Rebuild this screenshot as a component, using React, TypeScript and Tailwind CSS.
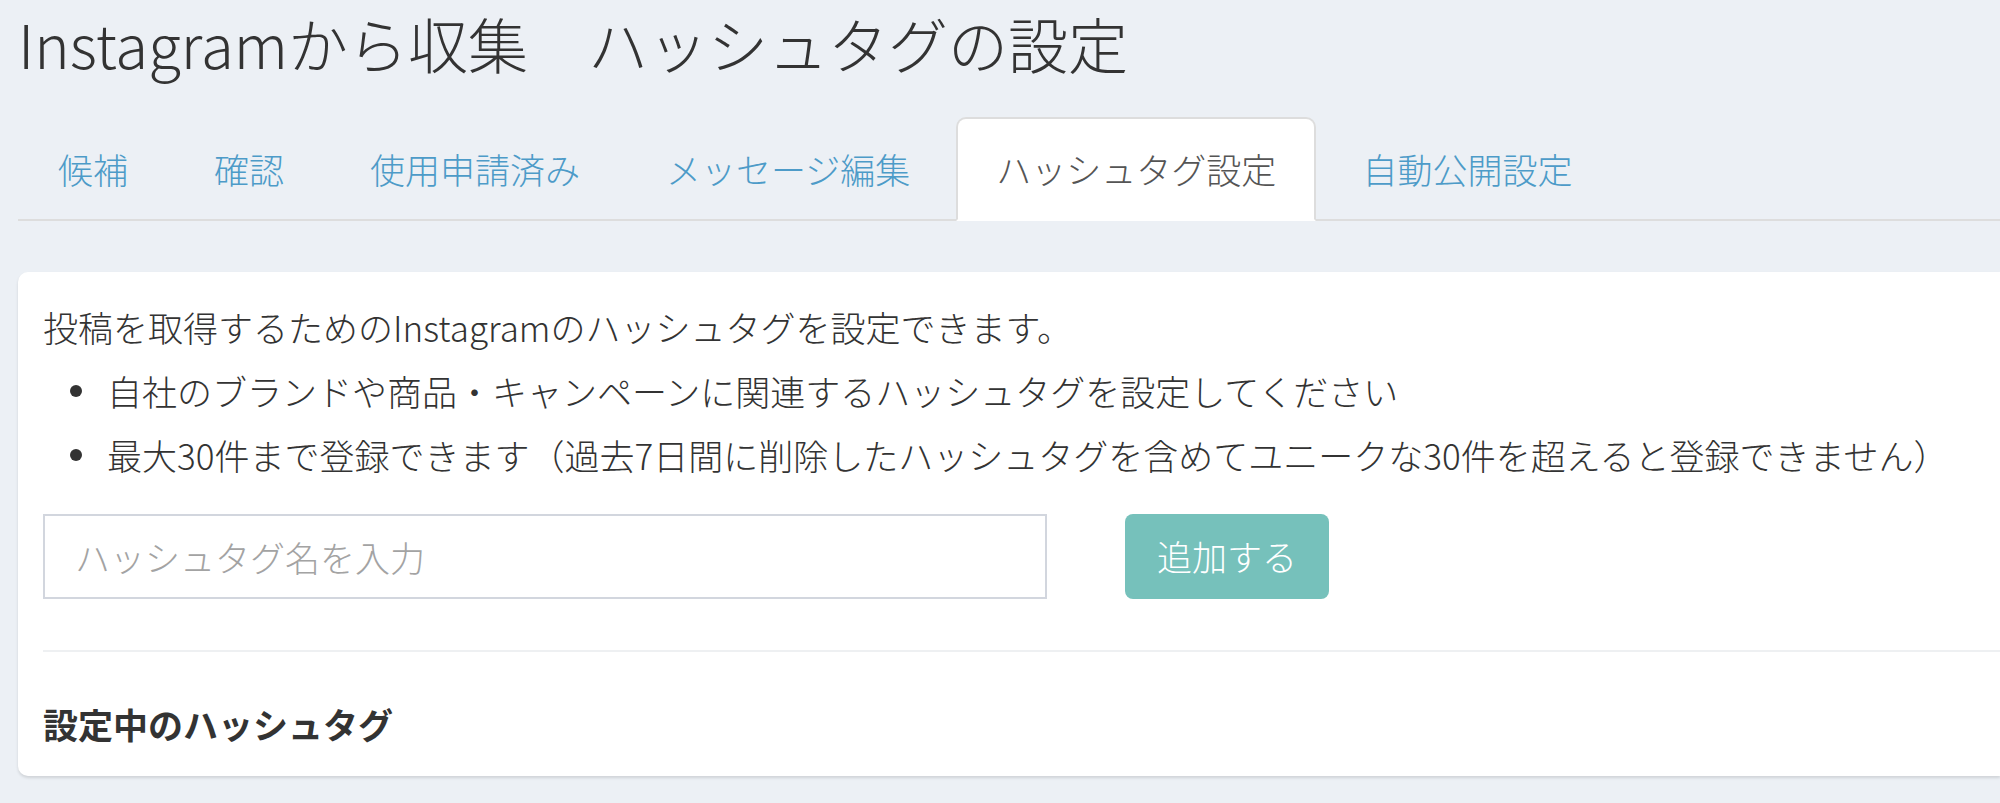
import { useState } from 'react'

const TABS = ['候補', '確認', '使用申請済み', 'メッセージ編集', 'ハッシュタグ設定', '自動公開設定']
const ACTIVE = 4

export default function App() {
  const [tag, setTag] = useState('')

  return (
    <div
      className="min-h-screen bg-[#ecf0f5] pl-[18px] font-light text-[#333]"
      style={{ fontFamily: '"Noto Sans CJK JP", "Noto Sans", sans-serif' }}
    >
      {/* タイトル */}
      <h1 className="pt-[10px] text-[60px] leading-[66px] font-light">Instagramから収集　ハッシュタグの設定</h1>

      {/* タブ */}
      <ul className="mt-[41px] flex border-b-2 border-[#ddd]">
        {TABS.map((t, i) => (
          <li key={t} className="-mb-[2px] mr-[6px]">
            <a
              href="#"
              className={
                i === ACTIVE
                  ? 'block rounded-t-[10px] border-2 border-[#ddd] border-b-white bg-white px-[38px] py-[25px] text-[35px] leading-[50px] text-[#555]'
                  : 'block rounded-t-[10px] border-2 border-transparent px-[38px] py-[25px] text-[35px] leading-[50px] text-[#4d9bc8]'
              }
            >
              {t}
            </a>
          </li>
        ))}
      </ul>

      {/* カード */}
      <div className="mt-[51px] rounded-l-[10px] bg-white pl-[25px] pt-[23px] pb-[27px] text-[35px] shadow-[0_2px_3px_rgba(0,0,0,0.12)]">
        <p className="leading-[64px]">投稿を取得するためのInstagramのハッシュタグを設定できます。</p>
        <ul className="leading-[64px]">
          {[
            '自社のブランドや商品・キャンペーンに関連するハッシュタグを設定してください',
            '最大30件まで登録できます（過去7日間に削除したハッシュタグを含めてユニークな30件を超えると登録できません）',
          ].map((s) => (
            <li key={s} className="flex items-center">
              <span className="flex w-[64px] shrink-0 justify-center">
                <span className="ml-[2px] h-[12px] w-[12px] rounded-full bg-[#333]" />
              </span>
              <span>{s}</span>
            </li>
          ))}
        </ul>

        <div className="mt-[27px] flex items-center">
          <input
            value={tag}
            onChange={(e) => setTag(e.target.value)}
            placeholder="ハッシュタグ名を入力"
            className="h-[85px] w-[1004px] border-2 border-[#d2d6de] px-[30px] text-[35px] font-light outline-none placeholder:text-[#a3a3a3]"
          />
          <button className="ml-[78px] h-[85px] w-[204px] rounded-[8px] bg-[#76c1bb] text-[35px] font-light text-white">
            追加する
          </button>
        </div>

        <div className="mt-[51px] h-[2px] bg-[#eef0f2]" />

        <h3 className="mt-[47px] text-[35px] leading-[50px] font-bold">設定中のハッシュタグ</h3>
      </div>
    </div>
  )
}
